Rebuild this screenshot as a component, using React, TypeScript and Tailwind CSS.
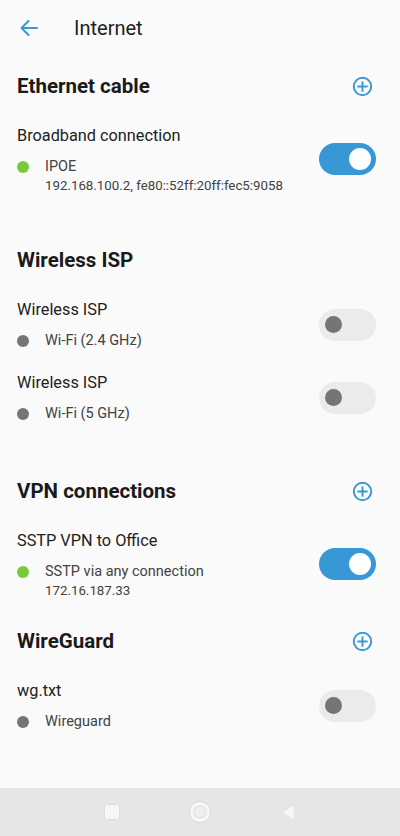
import React from "react";

type Item = {
  title: string;
  sub: string;
  detail?: string;
  active: boolean;
};

type Section = {
  heading: string;
  addable: boolean;
  items: Item[];
  gap: string;
};

const sections: Section[] = [
  {
    heading: "Ethernet cable",
    addable: true,
    gap: "mt-[2px]",
    items: [
      {
        title: "Broadband connection",
        sub: "IPOE",
        detail: "192.168.100.2, fe80::52ff:20ff:fec5:9058",
        active: true,
      },
    ],
  },
  {
    heading: "Wireless ISP",
    addable: false,
    gap: "mt-[28px]",
    items: [
      { title: "Wireless ISP", sub: "Wi-Fi (2.4 GHz)", active: false },
      { title: "Wireless ISP", sub: "Wi-Fi (5 GHz)", active: false },
    ],
  },
  {
    heading: "VPN connections",
    addable: true,
    gap: "mt-[29px]",
    items: [
      {
        title: "SSTP VPN to Office",
        sub: "SSTP via any connection",
        detail: "172.16.187.33",
        active: true,
      },
    ],
  },
  {
    heading: "WireGuard",
    addable: true,
    gap: "mt-[4px]",
    items: [{ title: "wg.txt", sub: "Wireguard", active: false }],
  },
];

function PlusIcon() {
  return (
    <svg width="21" height="21" viewBox="0 0 24 24" fill="none">
      <circle cx="12" cy="12" r="10" stroke="#3897d5" strokeWidth="2.2" />
      <path d="M12 7v10M7 12h10" stroke="#3897d5" strokeWidth="2.2" strokeLinecap="round" />
    </svg>
  );
}

function Toggle({ on }: { on: boolean }) {
  return on ? (
    <div className="w-[57px] h-[32px] rounded-full bg-[#3897d5] flex items-center justify-end pr-[5px] shrink-0">
      <div className="w-[22px] h-[22px] rounded-full bg-white" />
    </div>
  ) : (
    <div className="w-[57px] h-[32px] rounded-full bg-[#ebebeb] flex items-center pl-[6px] shrink-0">
      <div className="w-[17px] h-[17px] rounded-full bg-[#757575]" />
    </div>
  );
}

function Row({ item }: { item: Item }) {
  return (
    <div className="flex items-center pl-[17px] pr-[24px] pt-[10px] pb-[10px]">
      <div className="flex-1 min-w-0">
        <div className="text-[16.3px] leading-[24px] text-[#212121]">{item.title}</div>
        <div className="flex items-center mt-[9px]">
          <span
            className={
              "w-[12px] h-[12px] rounded-full shrink-0 " +
              (item.active ? "bg-[#7ac93a]" : "bg-[#757575]")
            }
          />
          <span className="ml-[16px] text-[14.5px] leading-[20px] text-[#424242]">{item.sub}</span>
        </div>
        {item.detail && (
          <div className="ml-[28px] text-[13.3px] leading-[17px] text-[#424242]">{item.detail}</div>
        )}
      </div>
      <Toggle on={item.active} />
    </div>
  );
}

export default function App() {
  return (
    <div
      className="w-[400px] h-[836px] bg-[#fafafa] flex flex-col overflow-hidden"
      style={{ fontFamily: "Roboto, 'Noto Sans', sans-serif" }}
    >
      {/* Top bar */}
      <div className="h-[56px] flex items-center shrink-0">
        <div className="w-[74px] pl-[19px] flex items-center">
          <svg width="20" height="18" viewBox="0 0 20 18" fill="none">
            <path
              d="M18 9H2.5M9.5 2L2.5 9l7 7"
              stroke="#3897d5"
              strokeWidth="2"
              strokeLinecap="round"
              strokeLinejoin="round"
            />
          </svg>
        </div>
        <div className="text-[20px] text-[#212121]">Internet</div>
      </div>

      <div className="flex-1">
        {sections.map((s) => (
          <div key={s.heading} className={s.gap}>
            <div className="h-[56px] flex items-center justify-between pl-[17px] pr-[27px]">
              <div className="text-[20.5px] font-bold text-[#1a1a1a]">{s.heading}</div>
              {s.addable && <PlusIcon />}
            </div>
            {s.items.map((it, i) => (
              <Row key={i} item={it} />
            ))}
          </div>
        ))}
      </div>

      {/* Android nav bar */}
      <div className="h-[48px] bg-[#e6e6e6] flex items-center justify-center gap-[71px] shrink-0">
        <div className="w-[14px] h-[14px] rounded-[2px] bg-[#f7f7f7] shadow-[0_0_2px_rgba(0,0,0,0.15)]" />
        <div className="w-[20px] h-[20px] rounded-full border-[3px] border-[#f7f7f7] shadow-[0_0_2px_rgba(0,0,0,0.15)] flex items-center justify-center">
          <div className="w-[10px] h-[10px] rounded-full bg-[#eeeeee]" />
        </div>
        <svg width="14" height="17" viewBox="0 0 14 17">
          <path d="M13 1L1 8.5l12 7.5z" fill="#f7f7f7" stroke="#dcdcdc" strokeWidth="0.5" strokeLinejoin="round" />
        </svg>
      </div>
    </div>
  );
}
